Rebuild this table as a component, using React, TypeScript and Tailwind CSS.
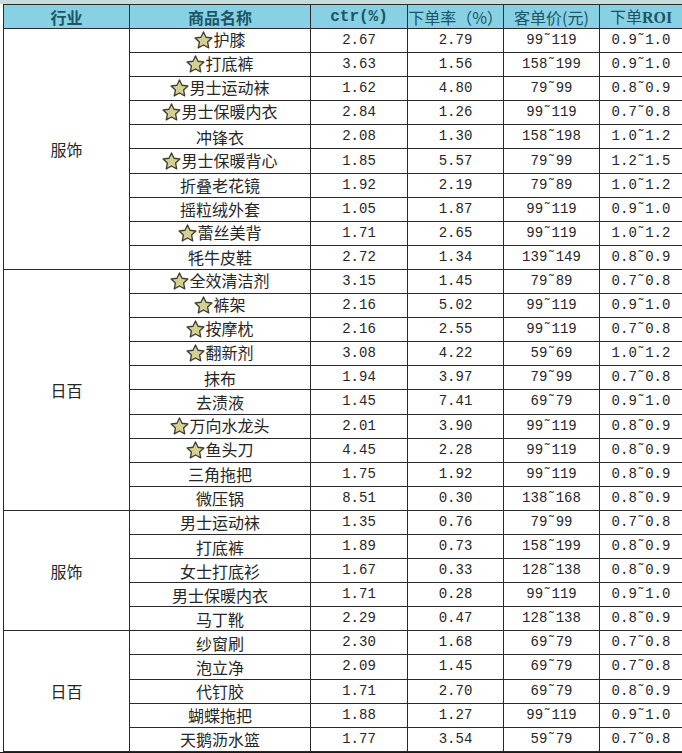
type Row = {
  name: string;
  star?: boolean;
  ctr: string;
  rate: string;
  price: string;
  roi: string;
};

type Group = { industry: string; rows: Row[] };

const groups: Group[] = [
  {
    industry: '服饰',
    rows: [
      { name: '护膝', star: true, ctr: '2.67', rate: '2.79', price: '99˜119', roi: '0.9˜1.0' },
      { name: '打底裤', star: true, ctr: '3.63', rate: '1.56', price: '158˜199', roi: '0.9˜1.0' },
      { name: '男士运动袜', star: true, ctr: '1.62', rate: '4.80', price: '79˜99', roi: '0.8˜0.9' },
      { name: '男士保暖内衣', star: true, ctr: '2.84', rate: '1.26', price: '99˜119', roi: '0.7˜0.8' },
      { name: '冲锋衣', ctr: '2.08', rate: '1.30', price: '158˜198', roi: '1.0˜1.2' },
      { name: '男士保暖背心', star: true, ctr: '1.85', rate: '5.57', price: '79˜99', roi: '1.2˜1.5' },
      { name: '折叠老花镜', ctr: '1.92', rate: '2.19', price: '79˜89', roi: '1.0˜1.2' },
      { name: '摇粒绒外套', ctr: '1.05', rate: '1.87', price: '99˜119', roi: '0.9˜1.0' },
      { name: '蕾丝美背', star: true, ctr: '1.71', rate: '2.65', price: '99˜119', roi: '1.0˜1.2' },
      { name: '牦牛皮鞋', ctr: '2.72', rate: '1.34', price: '139˜149', roi: '0.8˜0.9' },
    ],
  },
  {
    industry: '日百',
    rows: [
      { name: '全效清洁剂', star: true, ctr: '3.15', rate: '1.45', price: '79˜89', roi: '0.7˜0.8' },
      { name: '裤架', star: true, ctr: '2.16', rate: '5.02', price: '99˜119', roi: '0.9˜1.0' },
      { name: '按摩枕', star: true, ctr: '2.16', rate: '2.55', price: '99˜119', roi: '0.7˜0.8' },
      { name: '翻新剂', star: true, ctr: '3.08', rate: '4.22', price: '59˜69', roi: '1.0˜1.2' },
      { name: '抹布', ctr: '1.94', rate: '3.97', price: '79˜99', roi: '0.7˜0.8' },
      { name: '去渍液', ctr: '1.45', rate: '7.41', price: '69˜79', roi: '0.9˜1.0' },
      { name: '万向水龙头', star: true, ctr: '2.01', rate: '3.90', price: '99˜119', roi: '0.8˜0.9' },
      { name: '鱼头刀', star: true, ctr: '4.45', rate: '2.28', price: '99˜119', roi: '0.8˜0.9' },
      { name: '三角拖把', ctr: '1.75', rate: '1.92', price: '99˜119', roi: '0.8˜0.9' },
      { name: '微压锅', ctr: '8.51', rate: '0.30', price: '138˜168', roi: '0.8˜0.9' },
    ],
  },
  {
    industry: '服饰',
    rows: [
      { name: '男士运动袜', ctr: '1.35', rate: '0.76', price: '79˜99', roi: '0.7˜0.8' },
      { name: '打底裤', ctr: '1.89', rate: '0.73', price: '158˜199', roi: '0.8˜0.9' },
      { name: '女士打底衫', ctr: '1.67', rate: '0.33', price: '128˜138', roi: '0.8˜0.9' },
      { name: '男士保暖内衣', ctr: '1.71', rate: '0.28', price: '99˜119', roi: '0.9˜1.0' },
      { name: '马丁靴', ctr: '2.29', rate: '0.47', price: '128˜138', roi: '0.8˜0.9' },
    ],
  },
  {
    industry: '日百',
    rows: [
      { name: '纱窗刷', ctr: '2.30', rate: '1.68', price: '69˜79', roi: '0.7˜0.8' },
      { name: '泡立净', ctr: '2.09', rate: '1.45', price: '69˜79', roi: '0.7˜0.8' },
      { name: '代钉胶', ctr: '1.71', rate: '2.70', price: '69˜79', roi: '0.8˜0.9' },
      { name: '蝴蝶拖把', ctr: '1.88', rate: '1.27', price: '99˜119', roi: '0.9˜1.0' },
      { name: '天鹅沥水篮', ctr: '1.77', rate: '3.54', price: '59˜79', roi: '0.7˜0.8' },
    ],
  },
];

function Star() {
  return (
    <svg viewBox="0 0 24 24" className="inline-block h-[19px] w-[19px] align-[-4px]">
      <path
        d="M12 1.2l3.2 6.7 7.4.9-5.4 5.1 1.4 7.4L12 17.7l-6.6 3.6 1.4-7.4-5.4-5.1 7.4-.9z"
        fill="#d6d192"
        stroke="#3f3f32"
        strokeWidth="1.7"
        strokeLinejoin="round"
      />
    </svg>
  );
}

const cjk = "font-['Noto_Sans_CJK_SC',sans-serif]";
const mono = "font-['Liberation_Mono','DejaVu_Sans_Mono',monospace]";
const cell = 'border border-[#2a2a2a] p-0 text-center align-middle';

export default function App() {
  return (
    <div className="h-[753px] w-[682px] overflow-hidden bg-white">
      <div className="h-[4px] bg-[#c6dbe2]" />
      <table className="ml-[3px] w-[679px] table-fixed border-collapse">
        <colgroup>
          <col className="w-[126px]" />
          <col className="w-[181px]" />
          <col className="w-[97px]" />
          <col className="w-[96px]" />
          <col className="w-[96px]" />
          <col className="w-[83px]" />
        </colgroup>
        <thead>
          <tr className="h-[24px] bg-[#88d1e4] text-[16px] font-bold leading-none text-[#1d5566]">
            <th className={`${cell} ${cjk}`}>行业</th>
            <th className={`${cell} ${cjk}`}>商品名称</th>
            <th className={`${cell} ${mono}`}>ctr(%)</th>
            <th className={`${cell} ${cjk} font-normal`}>下单率（%）</th>
            <th className={`${cell} ${cjk} font-normal`}>客单价(元)</th>
            <th className={`${cell} ${cjk} font-normal`}>
              下单<span className="font-['Liberation_Serif',serif] font-bold">ROI</span>
            </th>
          </tr>
        </thead>
        <tbody className="text-[#262626]">
          {groups.map((g, gi) =>
            g.rows.map((r, ri) => (
              <tr key={`${gi}-${ri}`} className="h-[24.1px]">
                {ri === 0 && (
                  <td rowSpan={g.rows.length} className={`${cell} ${cjk} text-[16px]`}>
                    {g.industry}
                  </td>
                )}
                <td className={`${cell} ${cjk} text-[16px] leading-none`}>
                  {r.star && <Star />}
                  {r.name}
                </td>
                <td className={`${cell} ${mono} text-[14px]`}>{r.ctr}</td>
                <td className={`${cell} ${mono} text-[14px]`}>{r.rate}</td>
                <td className={`${cell} ${mono} text-[14px]`}>{r.price}</td>
                <td className={`${cell} ${mono} text-[14px]`}>{r.roi}</td>
              </tr>
            )),
          )}
        </tbody>
      </table>
      <div className="h-[4px] bg-[#1a1a1a]" />
    </div>
  );
}
